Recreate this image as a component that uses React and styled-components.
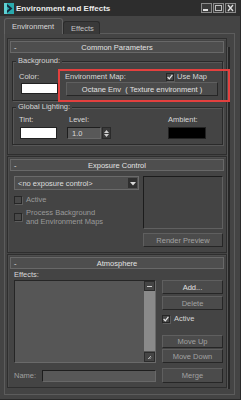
import React from "react"
import styled, { createGlobalStyle } from "styled-components"

const GlobalStyle = createGlobalStyle`
  * { box-sizing: border-box; }
  body {
    margin: 0;
    background: #444444;
    font-family: "Liberation Sans", Arial, sans-serif;
  }
`

const Window = styled.div`
  position: relative;
  width: 241px;
  height: 400px;
  background: #444444;
  display: flex;
  flex-direction: column;
  font-family: "Liberation Sans", Arial, sans-serif;
  font-size: 7.5px;
  line-height: 9px;
  color: #dcdcdc;
  border-right: 1px solid #2a2a2a;
  border-bottom: 1px solid #2a2a2a;
  overflow: hidden;
`

const TitleBar = styled.div`
  flex: none;
  height: 16px;
  display: flex;
  align-items: center;
  padding: 0 4px;
  background: #2d2d2d;
`

const Title = styled.div`
  flex: 1;
  margin-left: 2px;
  font-size: 8px;
  font-weight: bold;
  color: #ececec;
`

const WinButtons = styled.div`
  display: flex;
  gap: 1px;
`

const WinButton = styled.div`
  width: 11px;
  height: 10px;
  border: 1px solid #8a8a8a;
  background: #3a3a3a;
  display: flex;
  align-items: center;
  justify-content: center;
`

const TabRow = styled.div`
  flex: none;
  display: flex;
  align-items: flex-end;
  height: 15px;
  margin-top: 3px;
  padding-left: 4px;
  margin-bottom: -1px;
  position: relative;
  z-index: 1;
`

const Tab = styled.div`
  width: ${p => p.$w}px;
  height: ${p => (p.$active ? 16 : 13)}px;
  display: flex;
  align-items: center;
  padding: 0 0 ${p => (p.$active ? 1 : 0)}px 7px;
  background: ${p => (p.$active ? "#454545" : "#393939")};
  border: 1px solid ${p => (p.$active ? "#626262" : "#2b2b2b")};
  border-bottom: none;
  border-radius: 3px 3px 0 0;
  color: ${p => (p.$active ? "#d8d8d8" : "#c4c4c4")};
  font-size: 7.5px;
`

const TabPanel = styled.div`
  flex: 1;
  display: flex;
  margin: 0 5px 4px 4px;
  padding: 4px 0 0 2px;
  border: 1px solid #5c5c5c;
`

const RolloutColumn = styled.div`
  width: 220px;
  display: flex;
  flex-direction: column;
  gap: 1px;
`

const ScrollLine = styled.div`
  width: 2px;
  margin: 9px 0 5px 1px;
  background: #262626;
  box-shadow: -1px 0 0 #555555;
`

const Rollout = styled.div`
  height: ${p => p.$h}px;
  display: flex;
  flex-direction: column;
  padding: 2px;
  border: 1px solid #2e2e2e;
  box-shadow: inset 1px 1px 0 #4e4e4e;
`

const RolloutHeader = styled.div`
  flex: none;
  height: 12px;
  display: flex;
  align-items: center;
  position: relative;
  background: #4e4e4e;
  border: 1px solid #686868;
  color: #e2e2e2;
`

const Minus = styled.span`
  position: absolute;
  left: 3px;
  top: 1px;
`

const HeaderText = styled.span`
  flex: 1;
  text-align: center;
`

const Group = styled.div`
  position: relative;
  width: 211px;
  height: ${p => p.$h}px;
  margin: ${p => p.$mt}px 0 0 2px;
  padding: ${p => p.$pt}px 4px 0 6px;
  border: 1px solid #2a2a2a;
  box-shadow: inset 1px 1px 0 #575757, 1px 1px 0 #575757;
`

const Legend = styled.span`
  position: absolute;
  top: -6px;
  left: 3px;
  padding: 0 2px;
  background: #444444;
  color: #d4d4d4;
`

const BgRow = styled.div`
  display: flex;
`

const ColorCol = styled.div`
  width: 47px;
  display: flex;
  flex-direction: column;
`

const EnvCol = styled.div`
  flex: 1;
  display: flex;
  flex-direction: column;
`

const LabelRow = styled.div`
  display: flex;
  justify-content: space-between;
  align-items: center;
  height: 9px;
  padding-right: 11px;
`

const Label = styled.span`
  display: block;
  height: 9px;
  margin-left: ${p => p.$ml || 0}px;
  color: ${p => (p.$dim ? "#9c9c9c" : "#d8d8d8")};
  white-space: nowrap;
`

const Swatch = styled.div`
  width: ${p => p.$w}px;
  height: ${p => p.$h}px;
  margin: ${p => p.$mt}px 0 0 ${p => p.$ml || 0}px;
  background: ${p => p.$color};
  border: 1px solid #222222;
`

const CheckLabel = styled.label`
  display: flex;
  align-items: center;
  gap: ${p => p.$gap || 4}px;
  color: ${p => (p.$dim ? "#9a9a9a" : "#d6d6d6")};
  margin-top: ${p => p.$mt || 0}px;
  line-height: 9px;
`

const Box = styled.span`
  flex: none;
  width: 8px;
  height: 8px;
  display: flex;
  align-items: center;
  justify-content: center;
  background: #484848;
  border: 1px solid #262626;
  box-shadow: 1px 1px 0 #5c5c5c;
`

const Button = styled.div`
  flex: none;
  width: ${p => p.$w}px;
  height: ${p => p.$h || 14}px;
  margin-top: ${p => p.$mt || 0}px;
  margin-left: ${p => p.$ml || 0}px;
  display: flex;
  align-items: center;
  justify-content: center;
  background: #4b4b4b;
  border: 1px solid;
  border-color: #5f5f5f #262626 #262626 #5f5f5f;
  color: ${p => (p.$dim ? "#a2a2a2" : "#e0e0e0")};
  white-space: pre;
`

const LightingGrid = styled.div`
  display: grid;
  grid-template-columns: 48px 101px 1fr;
  row-gap: 3px;
`

const SpinnerWrap = styled.div`
  display: flex;
  gap: 1px;
  margin-top: 3px;
`

const Field = styled.div`
  width: ${p => p.$w}px;
  height: ${p => p.$h || 12}px;
  display: flex;
  align-items: center;
  padding-left: 4px;
  background: #585858;
  border: 1px solid;
  border-color: #1e1e1e #686868 #686868 #1e1e1e;
  color: #dadada;
`

const Spinner = styled.div`
  width: 9px;
  height: 12px;
  display: flex;
  flex-direction: column;
  align-items: center;
  justify-content: center;
  gap: 1px;
  background: #3a3a3a;
  border: 1px solid #2a2a2a;
`

const ExposureBody = styled.div`
  display: flex;
  gap: 4px;
  margin-top: 5px;
  padding-left: 4px;
`

const ExposureLeft = styled.div`
  width: 125px;
  display: flex;
  flex-direction: column;
`

const ExposureRight = styled.div`
  width: 80px;
  display: flex;
  flex-direction: column;
`

const Dropdown = styled.div`
  height: 14px;
  display: flex;
  align-items: center;
  justify-content: space-between;
  padding: 0 1px 0 3px;
  background: #4e4e4e;
  border: 1px solid #6a6a6a;
  color: #dedede;
`

const DropArrow = styled.span`
  width: 9px;
  height: 10px;
  display: flex;
  align-items: center;
  justify-content: center;
  background: #2f2f2f;
`

const Preview = styled.div`
  height: 53px;
  background: #444444;
  border: 1px solid;
  border-color: #1c1c1c #606060 #606060 #1c1c1c;
`

const TwoLine = styled.span`
  display: block;
  line-height: 9px;
`

const AtmosBody = styled.div`
  display: flex;
  flex-direction: column;
  padding-left: 4px;
`

const AtmosRow = styled.div`
  display: flex;
  gap: 6px;
  margin-top: 1px;
`

const ListBox = styled.div`
  width: 142px;
  height: 83px;
  display: flex;
  justify-content: flex-end;
  background: #565656;
  border: 1px solid;
  border-color: #262626 #6a6a6a #6a6a6a #262626;
`

const ScrollBar = styled.div`
  width: 11px;
  display: flex;
  flex-direction: column;
`

const ScrollBtn = styled.div`
  height: 10px;
  display: flex;
  align-items: center;
  justify-content: center;
  background: #454545;
  border: 1px solid #2c2c2c;
  margin: ${p => p.$m};
`

const ScrollTrack = styled.div`
  flex: 1;
  background: #8a8a8a;
`

const ButtonCol = styled.div`
  width: 61px;
  display: flex;
  flex-direction: column;
`

const NameRow = styled.div`
  display: flex;
  align-items: center;
  margin-top: 5px;
`

const NameLabel = styled.span`
  width: 28px;
  color: #a0a0a0;
`

const RedBox = styled.div`
  position: absolute;
  left: 58px;
  top: 69px;
  width: 172px;
  height: 33px;
  border: 2px solid #e3403e;
  pointer-events: none;
`

const Check = () => (
  <svg width="6" height="6" viewBox="0 0 6 6">
    <path d="M0.6 3 L2.3 4.8 L5.4 0.8" fill="none" stroke="#e8e8e8" strokeWidth="1.2" />
  </svg>
)

const Checkbox = ({ checked }) => <Box>{checked && <Check />}</Box>

const MaxIcon = () => (
  <svg width="10" height="11" viewBox="0 0 10 11">
    <rect width="10" height="11" fill="#2aa9ad" />
    <rect width="3" height="11" fill="#5fd0d2" />
    <path d="M3 1 L8.5 5.5 L3 10 L3 7.5 L5.5 5.5 L3 3.5 Z" fill="#14273a" />
  </svg>
)

const App = () => (
  <Window>
    <GlobalStyle />
    <TitleBar>
      <MaxIcon />
      <Title>Environment and Effects</Title>
      <WinButtons>
        <WinButton>
          <svg width="9" height="8" viewBox="0 0 9 8">
            <rect x="1" y="5" width="5" height="2" fill="#e0e0e0" />
          </svg>
        </WinButton>
        <WinButton>
          <svg width="9" height="8" viewBox="0 0 9 8">
            <rect x="1.5" y="1.5" width="6" height="5" fill="none" stroke="#bdbdbd" />
          </svg>
        </WinButton>
        <WinButton>
          <svg width="9" height="8" viewBox="0 0 9 8">
            <path d="M2 1 L7 7 M7 1 L2 7" stroke="#e0e0e0" strokeWidth="1.3" />
          </svg>
        </WinButton>
      </WinButtons>
    </TitleBar>

    <TabRow>
      <Tab $w={59} $active>Environment</Tab>
      <Tab $w={37}>Effects</Tab>
    </TabRow>

    <TabPanel>
      <RolloutColumn>
        <Rollout $h={117}>
          <RolloutHeader>
            <Minus>-</Minus>
            <HeaderText>Common Parameters</HeaderText>
          </RolloutHeader>
          <Group $mt={8} $h={40} $pt={10}>
            <Legend>Background:</Legend>
            <BgRow>
              <ColorCol>
                <Label>Color:</Label>
                <Swatch $w={37} $h={11} $mt={2} $ml={2} $color="#ffffff" />
              </ColorCol>
              <EnvCol>
                <LabelRow>
                  <Label>Environment Map:</Label>
                  <CheckLabel $gap={3}>
                    <Checkbox checked />
                    Use Map
                  </CheckLabel>
                </LabelRow>
                <Button $w={152} $mt={1} $ml={1}>Octane Env  ( Texture environment )</Button>
              </EnvCol>
            </BgRow>
          </Group>
          <Group $mt={6} $h={38} $pt={7}>
            <Legend>Global Lighting:</Legend>
            <LightingGrid>
              <Label>Tint:</Label>
              <Label $ml={2}>Level:</Label>
              <Label>Ambient:</Label>
              <Swatch $w={37} $h={12} $mt={0} $ml={1} $color="#ffffff" />
              <SpinnerWrap style={{ marginTop: 0 }}>
                <Field $w={34}>1.0</Field>
                <Spinner>
                  <svg width="5" height="3" viewBox="0 0 5 3">
                    <path d="M0 3 L2.5 0 L5 3 Z" fill="#cfcfcf" />
                  </svg>
                  <svg width="5" height="3" viewBox="0 0 5 3">
                    <path d="M0 0 L2.5 3 L5 0 Z" fill="#cfcfcf" />
                  </svg>
                </Spinner>
              </SpinnerWrap>
              <Swatch $w={38} $h={12} $mt={0} $color="#000000" />
            </LightingGrid>
          </Group>
        </Rollout>

        <Rollout $h={97}>
          <RolloutHeader>
            <Minus>-</Minus>
            <HeaderText>Exposure Control</HeaderText>
          </RolloutHeader>
          <ExposureBody>
            <ExposureLeft>
              <Dropdown>
                <span>&lt;no exposure control&gt;</span>
                <DropArrow>
                  <svg width="6" height="5" viewBox="0 0 6 5">
                    <path d="M0 1 L6 1 L3 4.5 Z" fill="#d8d8d8" />
                  </svg>
                </DropArrow>
              </Dropdown>
              <CheckLabel $dim $mt={5}>
                <Checkbox />
                Active
              </CheckLabel>
              <CheckLabel $dim $mt={4}>
                <Checkbox />
                <TwoLine>
                  Process Background
                  <br />
                  and Environment Maps
                </TwoLine>
              </CheckLabel>
            </ExposureLeft>
            <ExposureRight>
              <Preview />
              <Button $w={80} $mt={4} $dim>Render Preview</Button>
            </ExposureRight>
          </ExposureBody>
        </Rollout>

        <Rollout $h={134}>
          <RolloutHeader>
            <Minus>-</Minus>
            <HeaderText>Atmosphere</HeaderText>
          </RolloutHeader>
          <AtmosBody>
            <Label style={{ marginTop: 1 }}>Effects:</Label>
            <AtmosRow>
              <ListBox>
                <ScrollBar>
                  <ScrollBtn $m="0 0 0 0">
                    <svg width="5" height="3" viewBox="0 0 5 3">
                      <rect y="1" width="5" height="1" fill="#cfcfcf" />
                    </svg>
                  </ScrollBtn>
                  <ScrollTrack />
                  <ScrollBtn $m="1px 0 0 0">
                    <svg width="5" height="5" viewBox="0 0 5 5">
                      <path d="M1 4 L4 1 M2.5 4 L4 2.5" stroke="#cfcfcf" strokeWidth="0.8" />
                    </svg>
                  </ScrollBtn>
                </ScrollBar>
              </ListBox>
              <ButtonCol>
                <Button $w={61}>Add...</Button>
                <Button $w={61} $mt={2} $dim>Delete</Button>
                <CheckLabel $mt={4}>
                  <Checkbox checked />
                  Active
                </CheckLabel>
                <Button $w={61} $h={13} $mt={12} $dim>Move Up</Button>
                <Button $w={61} $mt={1} $dim>Move Down</Button>
              </ButtonCol>
            </AtmosRow>
            <NameRow>
              <NameLabel>Name:</NameLabel>
              <Field $w={114} $h={12} />
              <Button $w={61} $h={15} $ml={6} $dim>Merge</Button>
            </NameRow>
          </AtmosBody>
        </Rollout>
      </RolloutColumn>
      <ScrollLine />
    </TabPanel>

    <RedBox />
  </Window>
)

export default App
